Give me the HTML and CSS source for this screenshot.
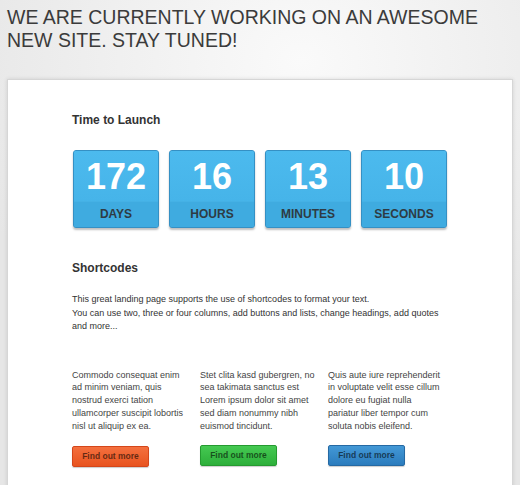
FILE: index.html
```html
<!DOCTYPE html>
<html lang="en">
<head>
    <meta charset="UTF-8">
    <meta name="viewport" content="width=device-width, initial-scale=1.0">
    <title>Coming Soon</title>
    <link rel="stylesheet" href="styles.css">
</head>
<body>
    <header class="site-header">
        <h1>WE ARE CURRENTLY WORKING ON AN AWESOME NEW SITE. STAY TUNED!</h1>
    </header>

    <main class="card">
        <h3 class="section-title">Time to Launch</h3>
        <div class="countdown">
            <div class="count-box">
                <span class="count-value" id="days">172</span>
                <span class="count-label">DAYS</span>
            </div>
            <div class="count-box">
                <span class="count-value" id="hours">16</span>
                <span class="count-label">HOURS</span>
            </div>
            <div class="count-box">
                <span class="count-value" id="minutes">13</span>
                <span class="count-label">MINUTES</span>
            </div>
            <div class="count-box">
                <span class="count-value" id="seconds">10</span>
                <span class="count-label">SECONDS</span>
            </div>
        </div>

        <h3 class="section-title shortcodes-title">Shortcodes</h3>
        <p class="intro">
            This great landing page supports the use of shortcodes to format your text.<br>
            You can use two, three or four columns, add buttons and lists, change headings, add quotes and more...
        </p>

        <div class="columns">
            <div class="column">
                <p>Commodo consequat enim ad minim veniam, quis nostrud exerci tation ullamcorper suscipit lobortis nisl ut aliquip ex ea.</p>
                <a href="#" class="btn btn-orange">Find out more</a>
            </div>
            <div class="column">
                <p>Stet clita kasd gubergren, no sea takimata sanctus est Lorem ipsum dolor sit amet sed diam nonummy nibh euismod tincidunt.</p>
                <a href="#" class="btn btn-green">Find out more</a>
            </div>
            <div class="column">
                <p>Quis aute iure reprehenderit in voluptate velit esse cillum dolore eu fugiat nulla pariatur liber tempor cum soluta nobis eleifend.</p>
                <a href="#" class="btn btn-blue">Find out more</a>
            </div>
        </div>
    </main>
</body>
</html>
```

FILE: styles.css
```css
body {
    font-family: "Liberation Sans", Arial, sans-serif;
    margin: 0;
    padding: 0;
    color: #444;
    background: radial-gradient(ellipse 70% 60% at 58% 12%, #fafafa 0%, #f1f1f1 45%, #e6e6e6 100%);
    min-height: 100vh;
}
.site-header {
    padding: 6px 7px 0;
}
.site-header h1 {
    margin: 0;
    font-size: 19.5px;
    line-height: 22.5px;
    font-weight: normal;
    color: #3b3b3b;
}
.card {
    margin: 28px 7px 0;
    padding: 33px 64px 40px;
    background: #fff;
    border: 1px solid #d6d6d6;
    box-shadow: 0 0 4px rgba(0, 0, 0, 0.12);
}
.section-title {
    margin: 0;
    font-size: 12px;
    line-height: 14px;
    font-weight: bold;
    color: #333;
}
.countdown {
    display: flex;
    gap: 10px;
    margin: 23px 0 0 1px;
}
.count-box {
    width: 84px;
    height: 76px;
    display: flex;
    flex-direction: column;
    border: 1px solid #3590c4;
    border-radius: 3px;
    background: #49b7ec;
    box-shadow: 0 2px 2px rgba(0, 0, 0, 0.25);
    overflow: hidden;
}
.count-value {
    flex: 1;
    display: flex;
    align-items: center;
    justify-content: center;
    padding-top: 2px;
    font-size: 36px;
    font-weight: bold;
    color: #fff;
    background: linear-gradient(#4cbaee, #46b4e9);
}
.count-label {
    height: 25px;
    line-height: 25px;
    text-align: center;
    font-size: 12px;
    font-weight: bold;
    color: #2e3b44;
    background: #3fabe0;
    border-top: 1px solid #45b1e5;
}
.shortcodes-title {
    margin-top: 33px;
}
.intro {
    margin: 18px 0 0;
    font-size: 9px;
    line-height: 13.5px;
    color: #333;
}
.columns {
    display: flex;
    gap: 12px;
    margin-top: 35px;
}
.column {
    width: 116px;
}
.column p {
    margin: 0;
    font-size: 9px;
    line-height: 12.75px;
    color: #444;
}
.btn {
    display: block;
    width: 75px;
    height: 19px;
    margin-top: 13px;
    line-height: 19px;
    text-align: center;
    font-size: 8.5px;
    font-weight: bold;
    text-decoration: none;
    color: rgba(0, 0, 0, 0.6);
    border-radius: 2px;
    box-shadow: 0 1px 1px rgba(0, 0, 0, 0.2);
}
.btn-orange {
    margin-top: 14px;
    background: linear-gradient(#f4703e, #e8531f);
    border: 1px solid #d4461a;
}
.btn-green {
    background: linear-gradient(#45c952, #2daf3a);
    border: 1px solid #259a30;
}
.btn-blue {
    background: linear-gradient(#4398d6, #2b7cbd);
    border: 1px solid #2569a3;
}
```
